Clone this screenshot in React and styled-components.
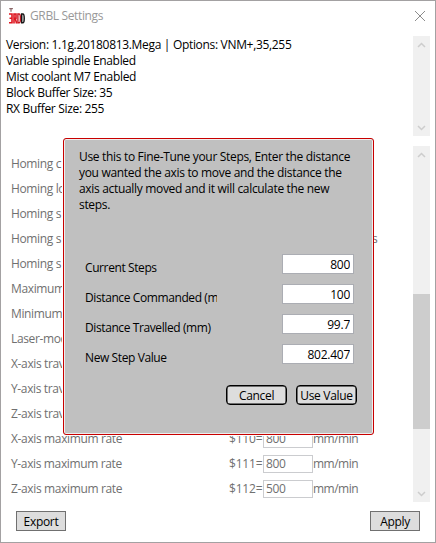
import React from "react";
import styled, { createGlobalStyle } from "styled-components";

const Global = createGlobalStyle`
  *, *::before, *::after { box-sizing: border-box; }
  body { margin: 0; overflow: hidden; background: #fff; }
  button, input { font: inherit; letter-spacing: inherit; }
`;

const Window = styled.main`
  position: relative;
  display: flex;
  flex-direction: column;
  width: 436px;
  height: 543px;
  border: 1px solid #a3a1a2;
  background: #fff;
  color: #000;
  font: 12px/16px "Open Sans", "Noto Sans", sans-serif;
  letter-spacing: -0.32px;
`;

const TitleBar = styled.header`
  display: flex;
  align-items: center;
  height: 35px;
  flex: none;
  padding: 0 10px 5px 8px;
`;

const Title = styled.span`
  flex: 1;
  margin-left: 5px;
  color: #999;
  letter-spacing: -0.36px;
`;

const Pane = styled.section`
  display: flex;
  flex: none;
  height: ${(p) => p.$height}px;
  margin: 0 5px ${(p) => p.$gap}px 0;
`;

const Info = styled.div`
  flex: 1;
  padding: 1px 0 0 5px;
`;

const Line = styled.div`
  height: 16px;
  white-space: nowrap;
`;

const Track = styled.div`
  display: flex;
  flex-direction: column;
  justify-content: space-between;
  flex: none;
  width: 17px;
  background: #f0f0f0;
`;

const Arrow = styled.svg`
  display: block;
  flex: none;
  width: 17px;
  height: 17px;
  fill: none;
  stroke: #cdcdcd;
  stroke-width: 1.5;
`;

const Thumb = styled.div`
  flex: none;
  height: 135px;
  margin: 131px 0 auto;
  background: #cdcdcd;
`;

const List = styled.div`
  flex: 1;
  padding-top: 5px;
  color: #707070;
  letter-spacing: -0.36px;
`;

const Row = styled.div`
  display: grid;
  grid-template-columns: 218px 34px 50px 1fr;
  align-items: center;
  height: 25px;
  padding-left: 10px;
  white-space: nowrap;
`;

const Key = styled.span`
  letter-spacing: -0.2px;
`;

const Rate = styled.input`
  width: 50px;
  height: 18px;
  padding: 0 2px;
  border: 1px solid #cbcccf;
  border-radius: 0;
  background: #fff;
  color: #707070;
  outline: none;
`;

const Unit = styled.span`
  letter-spacing: -0.5px;
`;

const Tail = styled.span`
  justify-self: start;
  margin-left: 59px;
`;

const Footer = styled.footer`
  display: flex;
  justify-content: space-between;
  padding: 9px 15px 0;
`;

const Button = styled.button`
  width: 50px;
  height: 20px;
  padding: 1px 0 0;
  border: 1px solid #707070;
  border-radius: 0;
  background: #ddd;
  color: #000;
  line-height: 18px;
  white-space: nowrap;
`;

const RoundButton = styled(Button)`
  width: 61px;
  border-color: #000;
  border-radius: 4px;
  box-shadow: inset 0 0 0 0.5px #000;
`;

const Dialog = styled.section`
  position: absolute;
  left: 62px;
  top: 137px;
  width: 311px;
  height: 297px;
  border: 1px solid #c80000;
  border-radius: 3px;
  background: #c0c0c0;
  box-shadow: inset 0 0 0 1px #eee, -1px 1px 0 #fff;
  padding: 10px 16px 0 15px;
`;

const Fields = styled.div`
  margin-top: 41px;
`;

const Field = styled.label`
  display: flex;
  justify-content: space-between;
  height: 30px;
  padding: 0 3px 0 6px;
`;

const FieldName = styled.span`
  width: 132px;
  padding-top: 6px;
  overflow: hidden;
  white-space: nowrap;
  letter-spacing: -0.4px;
`;

const Value = styled.input`
  width: 72px;
  height: 20px;
  padding: 0 3px;
  border: 1px solid #abadb3;
  border-radius: 0;
  background: #fff;
  color: #000;
  text-align: right;
  outline: none;
  letter-spacing: -0.25px;
`;

const Actions = styled.div`
  display: flex;
  justify-content: flex-end;
  gap: 9px;
  margin-top: 11px;
`;

const Chevron = ({ down }) => (
  <Arrow viewBox="0 0 17 17" aria-hidden="true">
    <path d={down ? "M5 7l3.5 3.5L12 7" : "M5 11l3.5-3.5L12 11"} />
  </Arrow>
);

const Logo = () => (
  <svg width="16" height="16" viewBox="0 0 16 16" fill="none" aria-hidden="true">
    <path d="M0.3 0.6h3.6M2 0.6v3.2" stroke="#8b6668" strokeWidth="1.2" />
    <path d="M0 6h3v8.8H0M0.5 10.3h2.5" stroke="#df1620" strokeWidth="1.6" />
    <path d="M5 15.5V6h2v4.2H5.5M6.2 10L7.6 15.5" stroke="#df1620" strokeWidth="1.6" />
    <path d="M8.9 6v8.7h1.2c1.1 0 1.3-1 1.3-4.3S11.2 6 10.1 6z" stroke="#c91822" strokeWidth="1.4" />
    <path d="M12.7 6v8.7h1.2c1.1 0 1.3-1 1.3-4.3S15 6 13.9 6z" stroke="#171717" strokeWidth="1.5" />
  </svg>
);

const info = [
  "Version: 1.1g.20180813.Mega | Options: VNM+,35,255",
  "Variable spindle Enabled",
  "Mist coolant M7 Enabled",
  "Block Buffer Size: 35",
  "RX Buffer Size: 255",
];

const rows = [
  { name: "Homing c" },
  { name: "Homing lo" },
  { name: "Homing s" },
  { name: "Homing s", tail: "s" },
  { name: "Homing s" },
  { name: "Maximum" },
  { name: "Minimum" },
  { name: "Laser-mod" },
  { name: "X-axis trav" },
  { name: "Y-axis trav" },
  { name: "Z-axis trav" },
  { name: "X-axis maximum rate", key: "$110=", value: "800" },
  { name: "Y-axis maximum rate", key: "$111=", value: "800" },
  { name: "Z-axis maximum rate", key: "$112=", value: "500" },
];

const help = [
  "Use this to Fine-Tune your Steps, Enter the distance",
  "you wanted the axis to move and the distance the",
  "axis actually moved and it will calculate the new",
  "steps.",
];

const fields = [
  ["Current Steps", "800"],
  ["Distance Commanded (mm)", "100"],
  ["Distance Travelled (mm)", "99.7"],
  ["New Step Value", "802.407"],
];

export default function App() {
  return (
    <>
      <Global />
      <Window>
        <TitleBar>
          <Logo />
          <Title>GRBL Settings</Title>
          <svg width="10" height="10" viewBox="0 0 10 10" stroke="#8c8c8c" aria-label="Close">
            <path d="M0 0L10 10M10 0L0 10" />
          </svg>
        </TitleBar>
        <Pane $height={100} $gap={10}>
          <Info>{info.map((t) => <Line key={t}>{t}</Line>)}</Info>
          <Track><Chevron /><Chevron down /></Track>
        </Pane>
        <Pane $height={356} $gap={0}>
          <List>
            {rows.map((r, i) => (
              <Row key={i}>
                <span>{r.name}</span>
                <Key>{r.key}</Key>
                {r.value ? <Rate defaultValue={r.value} /> : <span />}
                {r.value && <Unit>mm/min</Unit>}
                {r.tail && <Tail>{r.tail}</Tail>}
              </Row>
            ))}
          </List>
          <Track><Chevron /><Thumb /><Chevron down /></Track>
        </Pane>
        <Footer>
          <Button>Export</Button>
          <Button>Apply</Button>
        </Footer>
        <Dialog role="dialog">
          {help.map((t) => <Line key={t}>{t}</Line>)}
          <Fields>
            {fields.map(([name, value]) => (
              <Field key={name}>
                <FieldName>{name}</FieldName>
                <Value defaultValue={value} />
              </Field>
            ))}
          </Fields>
          <Actions>
            <RoundButton>Cancel</RoundButton>
            <RoundButton>Use Value</RoundButton>
          </Actions>
        </Dialog>
      </Window>
    </>
  );
}
